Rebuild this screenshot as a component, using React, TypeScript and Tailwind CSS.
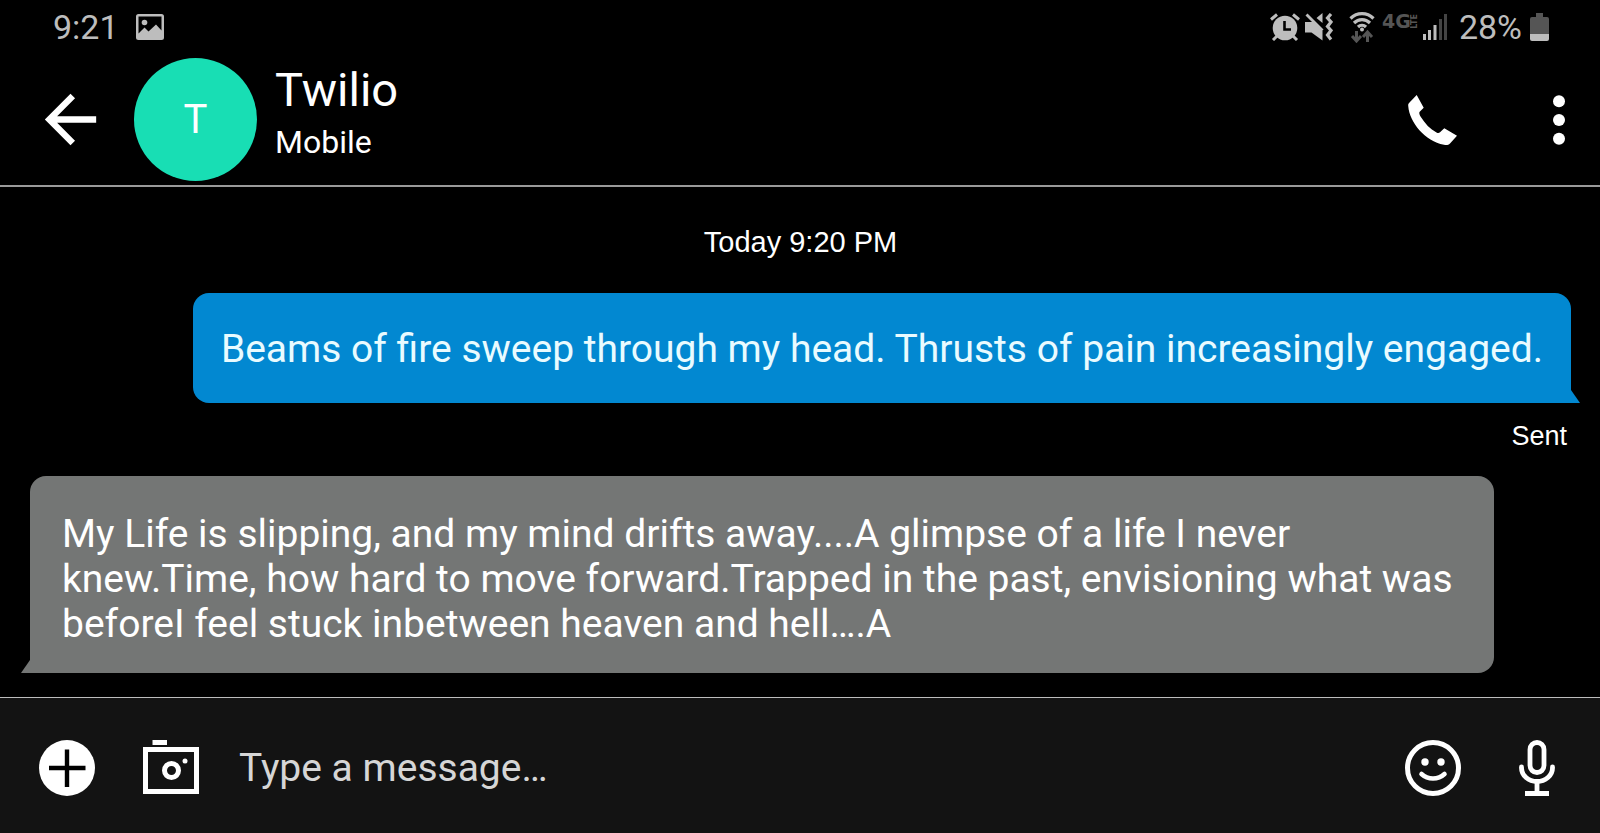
import { useState } from "react";

type Message = {
  id: number;
  text: string;
  outgoing: boolean;
  status?: string;
};

const messages: Message[] = [
  {
    id: 1,
    text: "Beams of fire sweep through my head. Thrusts of pain increasingly engaged.",
    outgoing: true,
    status: "Sent",
  },
  {
    id: 2,
    text: "My Life is slipping, and my mind drifts away....A glimpse of a life I never knew.Time, how hard to move forward.Trapped in the past, envisioning what was beforeI feel stuck inbetween heaven and hell….A",
    outgoing: false,
  },
];

function StatusBar() {
  return (
    <div className="flex h-14 items-center pb-0.5 pl-[53px] pr-[51px] font-[Roboto,sans-serif] text-[34px] leading-none text-[#bdbdbd]">
      <span>9:21</span>
      <svg viewBox="0 0 28 26" className="ml-[17px] h-[26px] w-7" fill="currentColor">
        <path
          fillRule="evenodd"
          d="M2.5 0h23A2.5 2.5 0 0 1 28 2.5v21a2.5 2.5 0 0 1-2.500 2.500h-23A2.500 2.500 0 0 1 0 23.500v-21A2.500 2.500 0 0 1 2.500 0zM2.500 2.500v17L8.500 13.500l4 4L20 10.500l5.500 6V2.500z"
        />
        <circle cx="8.500" cy="8.500" r="2.800" />
      </svg>

      <div className="ml-auto flex items-center">
        {/* alarm */}
        <svg viewBox="0 0 30 28" className="h-7 w-[30px]" fill="none" stroke="currentColor">
          <circle cx="15" cy="15" r="12.300" fill="currentColor" stroke="none" />
          <path d="M1 6.500L7 1.500M29 6.500L23 1.500M7 23l-4 4M23 23l4 4" strokeWidth="3" />
          <path d="M14.500 8v8.500H21" stroke="#000" strokeWidth="2.600" />
        </svg>
        {/* muted, vibrating */}
        <svg viewBox="0 0 28 28" className="ml-[5px] h-7 w-7" fill="none" stroke="currentColor">
          <path d="M0 9h8.500L17.500 18v9.500L6.500 19.500H0zM17.500 0v10l-6-5z" fill="currentColor" stroke="none" />
          <path d="M1.500 1.500l16 16" strokeWidth="2.800" />
          <path d="M26 1l-3.500 4 3.500 4-3.500 4.500 3.500 4-3.500 4.500 3.500 4.500" strokeWidth="3.200" />
        </svg>
        {/* wifi with traffic arrows */}
        <svg viewBox="0 0 26 32" className="ml-4 h-8 w-[26px]" fill="none" stroke="currentColor">
          <path d="M1.500 7.500c6.500-6.500 16.500-6.500 23 0M5 12c4.500-4.500 11.500-4.500 16 0M9 16c2.300-2.300 5.700-2.300 8 0" strokeWidth="3.200" />
          <circle cx="13" cy="18.500" r="2" fill="currentColor" stroke="none" />
          <path d="M7.500 20v9M3 25l4.500 5 4.500-5M18.500 31v-9M14 26l4.500-5 4.500 5" stroke="#555" strokeWidth="3" />
        </svg>
        <div className="mb-3 ml-[7px] flex items-center font-['DejaVu_Sans',sans-serif] font-bold leading-none text-[#555]">
          <span className="text-[19px]">4G</span>
          <span className="rotate-180 text-[8px] [writing-mode:vertical-rl]">LTE</span>
        </div>
        <svg viewBox="0 0 24 26" className="ml-1 h-[26px] w-6" fill="currentColor">
          <path d="M0 20h3v6H0zM5 16h3v10H5zM10.500 11h3v15h-3z" />
          <path d="M16 5h3v21h-3zM21 0h3v26h-3z" fill="#444" />
        </svg>
        <span className="ml-3">28%</span>
        <svg viewBox="0 0 19 28" className="ml-2 h-7 w-[19px]" fill="currentColor">
          <path d="M6 0h7v4h4a2 2 0 0 1 2 2v15H0V6a2 2 0 0 1 2-2h4z" fill="#555" />
          <path d="M0 21h19v5a2 2 0 0 1-2 2H2a2 2 0 0 1-2-2z" />
        </svg>
      </div>
    </div>
  );
}

function Header() {
  return (
    <header className="flex h-[131px] items-center border-b-2 border-[#9a9a9a] pb-0.5 pl-8 pr-[35px] font-[Roboto,sans-serif]">
      <button type="button" aria-label="Back">
        <svg viewBox="0 0 24 24" className="size-[77px]" fill="currentColor">
          <path d="M20 11H7.830l5.590-5.590L12 4l-8 8 8 8 1.410-1.410L7.830 13H20v-2z" />
        </svg>
      </button>
      <div className="ml-[25px] flex size-[123px] items-center justify-center rounded-full bg-[#18deb4] text-[40px]">
        T
      </div>
      <div className="ml-[18px] pb-1">
        <h1 className="text-[47px] leading-[48px]">Twilio</h1>
        <p className="text-[32px] leading-[56px]">Mobile</p>
      </div>
      <button type="button" aria-label="Call" className="ml-auto">
        <svg viewBox="0 0 49 50" className="h-[50px] w-[49px]" fill="currentColor">
          <path d="M8.700 0l7 12.700-4 4c-.8 1-.3 3 1 5C17 28.500 22 34 28.500 37.500c1.500.8 2.500.7 3.500-.2l4.300-4L49 40.800l-7 7.700C40.500 50 38.500 50.200 36 49.800 17 46.500 1.500 27 .3 11.500 0 9.500.3 8.700 1.500 7.500z" />
        </svg>
      </button>
      <button type="button" aria-label="More options" className="ml-24">
        <svg viewBox="0 0 12 50" className="h-[50px] w-3" fill="currentColor">
          <circle cx="6" cy="6.300" r="6" />
          <circle cx="6" cy="25" r="6" />
          <circle cx="6" cy="43.700" r="6" />
        </svg>
      </button>
    </header>
  );
}

function Bubble({ message }: { message: Message }) {
  return (
    <div
      className={
        message.outgoing
          ? "relative ml-auto w-fit rounded-2xl rounded-br-none bg-[#0288d1] px-7 pt-[34px] pb-[31px] text-[#e9fbff]"
          : "relative mr-[77px] w-fit rounded-2xl rounded-bl-none bg-[#747675] pl-8 pr-[30px] pt-9 pb-[26px]"
      }
    >
      <p className="font-[Roboto,sans-serif] text-[39px] leading-[45px]">{message.text}</p>
      {message.outgoing ? (
        <svg viewBox="0 0 9 13" className="absolute bottom-0 left-full h-[13px] w-[9px]">
          <path d="M0 0l9 13H0z" fill="#0288d1" />
        </svg>
      ) : (
        <svg viewBox="0 0 9 13" className="absolute right-full bottom-0 h-[13px] w-[9px]">
          <path d="M9 0L0 13h9z" fill="#747675" />
        </svg>
      )}
    </div>
  );
}

function Composer() {
  const [draft, setDraft] = useState("");

  return (
    <form
      className="flex h-[136px] items-center border-t border-[#bdbdbd] bg-[#131313] pt-[5px] pl-[39px] pr-[45px]"
      onSubmit={(e) => e.preventDefault()}
    >
      <button type="button" aria-label="Add attachment">
        <svg viewBox="0 0 56 56" className="size-14">
          <circle cx="28" cy="28" r="28" fill="#fff" />
          <path d="M28 9.500v37.500M10 28h36.500" stroke="#000" strokeWidth="4.400" />
        </svg>
      </button>
      <button type="button" aria-label="Camera" className="ml-12">
        <svg viewBox="0 0 56 56" className="size-14" fill="#fff">
          <path d="M9.500 0H24v5H9.500z" />
          <path d="M2.500 9.500h51v42h-51z" fill="none" stroke="#fff" strokeWidth="5" />
          <circle cx="28.500" cy="30.500" r="7" fill="none" stroke="#fff" strokeWidth="5" />
          <circle cx="42" cy="21" r="2.500" />
        </svg>
      </button>
      <input
        type="text"
        aria-label="Message"
        placeholder="Type a message…"
        value={draft}
        onChange={(e) => setDraft(e.target.value)}
        className="ml-10 h-14 min-w-0 flex-1 bg-transparent font-[Roboto,sans-serif] text-[39px] outline-none placeholder:text-[#d6d6d6]"
      />
      <button type="button" aria-label="Emoji">
        <svg viewBox="0 0 56 56" className="size-14" fill="#fff">
          <circle cx="28" cy="28" r="25.500" fill="none" stroke="#fff" strokeWidth="5" />
          <circle cx="20" cy="22" r="3.700" />
          <circle cx="36" cy="22" r="3.700" />
          <path d="M16.500 34c6.500 6 16.500 6 23 0" fill="none" stroke="#fff" strokeWidth="4.600" strokeLinecap="round" />
        </svg>
      </button>
      <button type="button" aria-label="Voice message" className="ml-[58px]">
        <svg viewBox="0 0 36 56" className="h-14 w-9" fill="none" stroke="#fff" strokeWidth="4.800">
          <rect x="11" y="2.500" width="14" height="30" rx="7" />
          <path d="M2.500 27v1a15.500 13.500 0 0 0 31 0v-1" strokeLinecap="round" />
          <path d="M18 42v10M6 53.500h24" />
        </svg>
      </button>
    </form>
  );
}

export default function App() {
  return (
    <div className="flex min-h-screen flex-col bg-black text-white">
      <StatusBar />
      <Header />
      <main className="flex-1 pb-6 pl-[30px] pr-[29px] font-['Liberation_Sans',sans-serif]">
        <p className="pt-[35px] pb-[31px] text-center text-[29px] leading-10">Today 9:20 PM</p>
        {messages.map((message) => (
          <div key={message.id}>
            <Bubble message={message} />
            {message.status && (
              <p className="pt-[17px] pr-1 pb-6 text-right text-[27px] leading-8">{message.status}</p>
            )}
          </div>
        ))}
      </main>
      <Composer />
    </div>
  );
}
